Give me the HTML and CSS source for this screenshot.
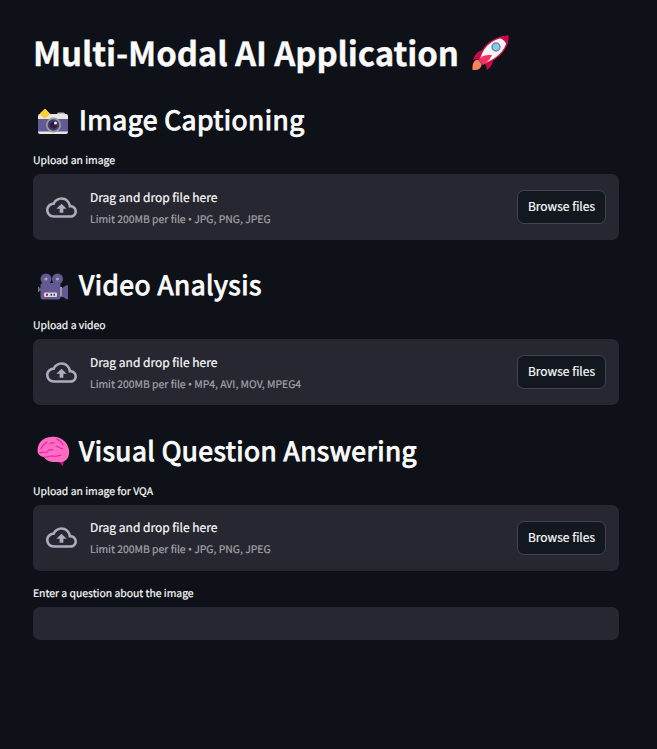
FILE: index.html
```html
<!DOCTYPE html>
<html lang="en">
<head>
<meta charset="utf-8">
<title>Multi-Modal AI Application</title>
<link rel="stylesheet" href="styles.css">
</head>
<body>
<svg class="defs" aria-hidden="true">
  <symbol id="upload" viewBox="0 0 24 24"><path d="M19.35 10.04C18.67 6.59 15.64 4 12 4 9.11 4 6.6 5.64 5.35 8.04 2.34 8.36 0 10.91 0 14c0 3.31 2.69 6 6 6h13c2.76 0 5-2.24 5-5 0-2.64-2.05-4.78-4.65-4.96zM19 18H6c-2.21 0-4-1.79-4-4s1.79-4 4-4h.71C7.37 7.69 9.48 6 12 6c3.04 0 5.5 2.46 5.5 5.5v.5H19c1.66 0 3 1.34 3 3s-1.34 3-3 3zM8 13h2.55v3h2.9v-3H16l-4-4z"/></symbol>
</svg>
<main class="page">
  <h1 class="title"><span class="title-text">Multi-Modal AI Application</span>
    <svg class="rocket" viewBox="0 0 40 38">
      <path fill="#ff8357" d="M9 26c-5-1-7 4-6.500 10 5 .5 9-1 9-6z"/>
      <path fill="#635994" d="M10 22L8 26l4 5 5-3z"/>
      <path fill="#ca0b4a" d="M13 16C8 17 5 20 3 26l9-2zM23 25c0 5-2 8-6 11l-2-8z"/>
      <path fill="#f4f4f4" d="M10 23C13 13 21 4 38 2c0 13-9 22-23 28z"/>
      <path fill="#ca0b4a" d="M29 3.500c3-1.300 6-1.500 9-1.500.5 4 0 7-1 10-1-4-4-7-8-8.500z"/>
      <path fill="none" stroke="#ca0b4a" stroke-width="1.300" d="M10 23C13 13 21 4 38 2c0 13-9 22-23 28"/>
      <path fill="#f92f60" d="M9 26c2-4 5-5 13-5-2 4-4 7-9 10z"/>
      <circle cx="26" cy="13" r="4" fill="#83cbff" stroke="#7d8792" stroke-width="1.500"/>
    </svg>
  </h1>

  <h2 class="heading">
    <svg class="emoji" viewBox="0 0 32 32">
      <rect x="20" y="5.500" width="8" height="4" rx="1.500" fill="#bdbdbd"/>
      <rect x="1" y="7" width="30" height="20" rx="2" fill="#e6e6e6"/>
      <path fill="#635994" d="M1 12h30v12.500H1z"/>
      <circle cx="16.500" cy="18" r="7.500" fill="#9b9b9b"/>
      <circle cx="16.500" cy="18" r="5.800" fill="#433b6b"/>
      <circle cx="16.500" cy="18" r="3.500" fill="#321b41"/>
      <circle cx="18.500" cy="16" r="1.500" fill="#e8eff8"/>
      <path fill="#ffce31" stroke="#ffce31" stroke-linejoin="round" d="M8 2l4.500 4.700L8 11.500 3 6.700z"/>
    </svg><span class="heading-text">Image Captioning</span>
  </h2>
  <p class="label">Upload an image</p>
  <section class="uploader">
    <svg class="cloud"><use href="#upload"/></svg>
    <div class="copy"><span class="drag">Drag and drop file here</span><span class="limit">Limit 200MB per file <span class="dot">•</span> JPG, PNG, JPEG</span></div>
    <button class="browse">Browse files</button>
  </section>

  <h2 class="heading">
    <svg class="emoji" viewBox="0 -1 32 32">
      <path fill="#777" d="M1 14h1.300v5H1zM2 15.500h2v2H2z"/>
      <path fill="#4d4476" d="M20 17h6v7h-6z"/>
      <circle cx="9" cy="6" r="5.500" fill="#635994"/><circle cx="20.500" cy="6" r="5.500" fill="#635994"/>
      <circle cx="9" cy="6" r="1.500" fill="#aaa"/><circle cx="20.500" cy="6" r="1.500" fill="#aaa"/>
      <rect x="3.500" y="10" width="20" height="16.500" rx="2.500" fill="#635994"/>
      <path fill="#635994" d="M25 15l5-3q1 0 1 1v12.500q0 1-1 1l-5-3z"/>
      <path fill="#9b9b9b" d="M23 14h2v9.500h-2z"/>
      <rect x="7" y="19.500" width="13" height="4.500" rx="1" fill="#d8d8dc"/>
      <path fill="#ca0b4a" d="M9 20.700h2v2H9z"/><path fill="#433b6b" d="M13.500 20.700H15v2h-1.500zM16.500 20.700H18v2h-1.500z"/>
    </svg><span class="heading-text">Video Analysis</span>
  </h2>
  <p class="label">Upload a video</p>
  <section class="uploader">
    <svg class="cloud"><use href="#upload"/></svg>
    <div class="copy"><span class="drag">Drag and drop file here</span><span class="limit">Limit 200MB per file <span class="dot">•</span> MP4, AVI, MOV, MPEG4</span></div>
    <button class="browse">Browse files</button>
  </section>

  <h2 class="heading">
    <svg class="emoji" viewBox="0 2 32 32">
      <path fill="#ca0b8a" d="M20 23l6 7.500 1-8z"/>
      <path fill="#ff6cc4" d="M14 1C7 1 1 6 .5 14c0 4 2 6.500 6.500 7 2 4 7 5 10 5 5 0 9 1 12-2 3-2 4-8 2.500-12C29 4 22 0 14 1z"/>
      <path fill="none" stroke="#e5249f" stroke-width="1.100" stroke-linecap="round" d="M4 13c1-3 3-5 6-7M20 3c2 2 5 2 6 6M3 17c3-2 5 0 7-1 1-2 3-3 6-2M8 21c3 0 4-1 6-1 3 0 6 1 10-1M13 8c1-1 2-2 4-1M19 10c2 0 4 3 7 3"/>
    </svg><span class="heading-text">Visual Question Answering</span>
  </h2>
  <p class="label">Upload an image for VQA</p>
  <section class="uploader">
    <svg class="cloud"><use href="#upload"/></svg>
    <div class="copy"><span class="drag">Drag and drop file here</span><span class="limit">Limit 200MB per file <span class="dot">•</span> JPG, PNG, JPEG</span></div>
    <button class="browse">Browse files</button>
  </section>

  <label class="label question" for="question">Enter a question about the image</label>
  <input class="field" id="question" type="text">
</main>
</body>
</html>
```
FILE: styles.css
```css
* { box-sizing: border-box; }
body {
  margin: 0;
  min-height: 749px;
  background: #0e1117;
  color: #fafafa;
  font-family: "Noto Sans CJK SC", "Noto Sans", sans-serif;
  text-rendering: geometricPrecision;
}
.defs { display: none; }
.page { width: 586px; margin-left: 33px; padding-top: 31px; }
.title {
  display: flex;
  align-items: center;
  height: 44px;
  margin: 0;
  font-size: 33px;
  line-height: 42px;
  font-weight: 700;
  letter-spacing: -0.1px;
  white-space: nowrap;
}
.title-text { margin-top: -2px; -webkit-text-stroke: 0.3px #fafafa; }
.rocket { width: 40px; height: 38px; margin-left: 11px; }
.heading {
  display: flex;
  align-items: center;
  height: 40px;
  margin: 24px 0 0;
  font-size: 26.5px;
  line-height: 40px;
  font-weight: 400;
  letter-spacing: 0.47px;
  -webkit-text-stroke: 1px #fafafa;
  white-space: nowrap;
}
.emoji { width: 32px; height: 32px; margin: 8px 10px 0 4px; overflow: visible; }
.label {
  display: block;
  height: 20px;
  margin: 11px 0 4px;
  font-size: 10.4px;
  line-height: 20px;
  -webkit-text-stroke: 0.2px #fafafa;
}
.uploader {
  display: flex;
  align-items: center;
  height: 66px;
  padding: 0 13px;
  margin-bottom: 24.4px;
  border-radius: 7px;
  background: #262730;
}
.heading + .label { margin-top: 11px; }
.uploader + .heading { margin-top: 0; }
.cloud { width: 31px; height: 31px; margin-right: 13px; fill: #a9adbe; }
.copy { display: flex; flex-direction: column; flex: 1; padding-top: 2px; white-space: nowrap; }
.drag { font-size: 12px; line-height: 22px; -webkit-text-stroke: 0.2px #fafafa; }
.limit { font-size: 10.4px; line-height: 20px; color: #a3a3a8; -webkit-text-stroke: 0.2px #a3a3a8; }
.dot { font-family: "Noto Sans", sans-serif; }
.browse {
  width: 89px;
  height: 34px;
  padding: 0 0 2px;
  border: 1px solid #41444c;
  border-radius: 7px;
  background: #131720;
  color: #fafafa;
  font: 12px/30px "Noto Sans CJK SC", "Noto Sans", sans-serif;
  -webkit-text-stroke: 0.2px #fafafa;
}
.question { margin-top: -12.6px; }
.field {
  display: block;
  width: 100%;
  height: 33px;
  padding: 0 10px;
  border: 0;
  border-radius: 7px;
  background: #262730;
  color: #fafafa;
}
```
